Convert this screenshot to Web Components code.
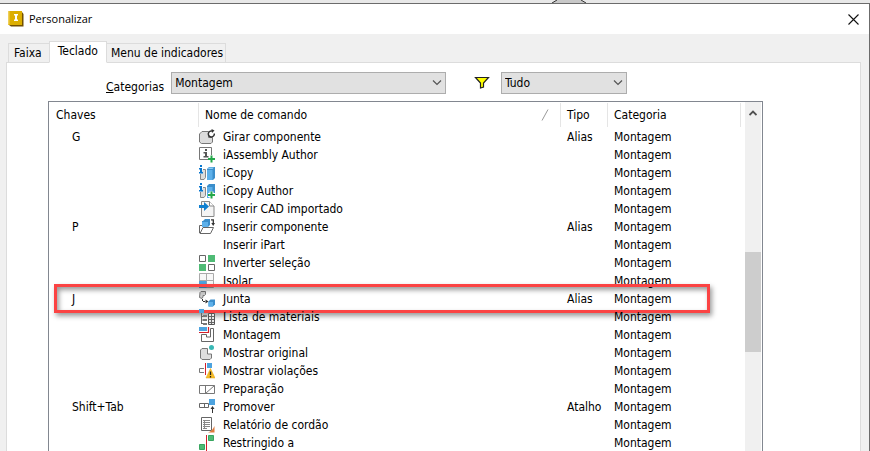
<!DOCTYPE html>
<html lang="pt-BR">
<head>
<meta charset="utf-8">
<title>Personalizar</title>
<style>
  html, body { margin: 0; height: 100%; overflow: hidden; }
  body { font: 12px/18px "DejaVu Sans Condensed", "Noto Sans", sans-serif; color: #000; background: #e8e8e8; }
</style>
</head>
<body>
<customize-dialog heading="Personalizar">
  <tab-strip slot="tabs" tabs="Faixa|Teclado|Menu de indicadores" selected="1"></tab-strip>
  <filter-bar></filter-bar>
  <command-list></command-list>
</customize-dialog>

<script>
const define = (name, html, setup) => customElements.define(name, class extends HTMLElement {
  connectedCallback() {
    if (this.shadowRoot) return;
    const t = document.createElement('template');
    t.innerHTML = html;
    this.attachShadow({ mode: 'open' }).append(t.content.cloneNode(true));
    if (setup) setup(this, this.shadowRoot);
  }
});

const ICONS = {
  rotate: '<path d="M3 2.500h6.500v6h4V13l-1.500 1.500H2.500l-2-1.500V5z" fill="#dcdcdc" stroke="#777"/><path d="M15.300 4.500a3 3 0 1 1-2.300-2.500" fill="none" stroke="#333" stroke-width="1.500"/><path d="M12.500 0 15.500 1.500 13 4z" fill="#333"/>',
  author: '<path d="M9 12.500H.500V.500h12V8" fill="#fff" stroke="#777"/><path d="M6 2h2v2H6zM4.500 5H8v4h1.500v1.500h-5V9H6V6.500H4.500z" fill="#555"/><path d="M9 12h7M12.500 8.500v7" stroke="#25a84a" stroke-width="2"/>',
  icopy: '<path d="M4 4.500h2.500v8L5 14.500H1.500V9" fill="#ddd" stroke="#888"/><path d="M1 0h2v2H1zM0 3h3v4h1v1.500H0V7h1V4.500H0z" fill="#0876cf"/><path d="m8 4 2-2h6v11l-2 2H8z" fill="#3b8ecb"/><path d="M8 5h5.500v10H8z" fill="#5db0ea"/><path d="m8.500 4 1.800-1.500H15L13.500 4z" fill="#8accf5"/>',
  icopyauthor: '<path d="M4 4.500h2.500v8L5 14.500H1.500V9" fill="#ddd" stroke="#888"/><path d="M1 0h2v2H1zM0 3h3v4h1v1.500H0V7h1V4.500H0z" fill="#0876cf"/><path d="m8 3 2-2h6v9h-4v5H8z" fill="#3b8ecb"/><path d="M8 4h5.500v5H11v6H8z" fill="#5db0ea"/><path d="M9 12h7M12.500 8.500v7" stroke="#fff" stroke-width="4"/><path d="M9 12h7M12.500 8.500v7" stroke="#25a84a" stroke-width="2"/>',
  import: '<path d="M2.500.500h8l4.500 4.500v10.500H2.500z" fill="#f4f4f4" stroke="#888"/><path d="M10.500.500V5H15" fill="#fff" stroke="#888"/><path d="M0 4h5V1l5 4.500L5 10V7H0z" fill="#1080d0"/>',
  place: '<path d="m4 8.500-3 6h10.500l3-6z" fill="#fff" stroke="#666"/><path d="M.500 14V6.500H3" fill="none" stroke="#666"/><path d="m4 2 2-2h5v6L9 8H3V2z" fill="#3b8ecb"/><path d="M3 3h6v5H3z" fill="#5db0ea"/><path d="M12 .800h2.300V5" fill="none" stroke="#333" stroke-width="1.300"/><path d="M12.300 4H16l-1.800 3z" fill="#333"/>',
  invert: '<path d="M.500.500h6v6h-6zM9.500 9.500h6v6h-6z" fill="#fff" stroke="#666"/><path d="M9 0h7v7H9zM0 9h7v7H0z" fill="#4fbb75"/>',
  isolate: '<path d="M.500.500h14v14H.500zM7.500.500v14M.500 7.500h14" fill="#f8f8f8" stroke="#aaa"/><path d="M0 8h7.500v7H0z" fill="#4da3df"/>',
  joint: '<path d="M1 1.500 2 .500h4.500v3L5.500 4.500H4V6L3 7.500.500 6.500z" fill="#ccc" stroke="#777"/><path d="M3.500 8v2.500H7" fill="none" stroke="#333" stroke-dasharray="2 1"/><path d="m6.500 8.500 3 2-3 2z" fill="#333"/><path d="m9.500 10.500 2-2H16v5L14 15.500H9.500z" fill="#3b8ecb"/><path d="M9.500 11H14v4.500H9.500z" fill="#5db0ea"/>',
  bom: '<path d="M0 0h5v4H0z" fill="#4da3df"/><path d="M2.500 4v11M2.500 7.500H4M2.500 11H4M2.500 14.500H4" fill="none" stroke="#666"/><path d="M4 6h4v2H4zM4 10h4v2H4zM4 14h4v2H4z" fill="#777"/><path d="M9.500 4.500h6v11h-6z" fill="#e8e8e8" stroke="#555"/><path d="M10 7.500h5M10 10.500h5M10 13.500h5M12.500 5v10" stroke="#666"/>',
  assembly: '<path d="M0 0h8v4H0z" fill="#4da3df"/><path d="M0 5.500h9.500V0" fill="none" stroke="#d3202c" stroke-width="1.200"/><path d="M11.500 1.500h3v13H2.500v-7h5V10h4z" fill="#fff" stroke="#666"/>',
  original: '<path d="M3 3.500h5.500V9h4v4l-1.500 1.500H3L1.500 13V5z" fill="#ddd" stroke="#777"/><circle cx="12.500" cy="2.500" r="2.500" fill="#38b8b5"/>',
  violation: '<path d="M5 5.500H.500v4H5" fill="#fff" stroke="#777"/><path d="M6.500 0v12" stroke="#d3202c"/><path d="M8 0h5v5H8z" fill="#4da3df"/><path d="m11.500 5.500 4.500 9.500H7z" fill="#f7bd27" stroke="#e0a010" stroke-width=".500"/><path d="M11.500 8.500V12M11.500 13v1.500" stroke="#222" stroke-width="1.300"/>',
  prep: '<path d="M.500 4.500h15v8H.500zM6.500 4.500v8M6.500 12.500l9-8" fill="#fff" stroke="#777"/>',
  promote: '<path d="M.500 4.500h9v4h-9zM5.500 4.500v4" fill="#fff" stroke="#666"/><path d="M10 0h6v6h-6z" fill="#4da3df"/><path d="M13.500 9v5" stroke="#333"/><path d="m11.500 10 2-3 2 3z" fill="#333"/>',
  report: '<path d="M2.500.500h10v13h-10z" fill="#fff" stroke="#666"/><path d="M4 3.500h7M4 5.500h7M4 7.500h7M4 9.500h7M4 11.500h4M5.500 3v9" stroke="#888"/><path d="M15.500 9v6.500H9c3-1 5-3 6.500-6.500z" fill="#e07a3c"/>',
  constrain: '<path d="M9.500.500h5v5h-5zM.500 9.500h5v5h-5z" fill="#4fbb75" stroke="#38a660"/><path d="M7.500 0v16" stroke="#d3202c"/>',
  funnel: '<path d="M1.500 2.500h13l-5 5.500V12l-3 1V8z" fill="#ffff00" stroke="#222" stroke-width="1.200"/>',
  app: '<path d="m1 14 2 1.500h12.500V3L14 1v13z" fill="#735000"/><path d="M0 0h14v14H0z" fill="#dcae00"/><path d="M0 0h1.500v13L0 14z" fill="#efcf58"/><path d="M6 3h4v1.500H9v4h1V10H6V8.500h1v-4H6z" fill="#fff"/>'
};

define('ui-icon', `<style>:host{display:block;width:16px;height:16px}svg{display:block;width:16px;height:16px}</style>
<svg viewBox="0 0 16 16" aria-hidden="true"></svg>`, (el, root) => {
  root.querySelector('svg').innerHTML = ICONS[el.getAttribute('name')] || '';
});

define('customize-dialog', `<style>
  :host{display:flex;flex-direction:column;min-height:100vh;background:#e8e8e8}
  .behind{height:3px;display:flex;justify-content:center;padding-left:267px}
  .behind svg{display:block}
  .frame{flex:1;display:flex;flex-direction:column;border-top:1px solid #6b6b6b;border-right:1px solid #6b6b6b;background:#f0f0f0}
  header{display:flex;align-items:center;height:30px;padding:0 10px 0 8px;background:#fff;gap:5px}
  h1{flex:1;margin:0;font:11px/18px "Open Sans","Noto Sans",sans-serif}
  button{border:0;padding:0;background:none;display:block}
  button svg{display:block}
  .body{flex:1;display:flex;flex-direction:column;padding:7px 8px 0 6px}
  .panel{flex:1;display:flex;flex-direction:column;background:#fff;border:1px solid #dcdcdc;border-bottom:0}
</style>
<div class="behind"><svg width="34" height="3" viewBox="0 0 34 3" aria-hidden="true"><path d="M0 3 5 0h24l5 3z" fill="#c8c8c8"/><path d="M0 3 5 0M34 3 29 0" stroke="#333"/></svg></div>
<section class="frame">
  <header><ui-icon name="app"></ui-icon><h1></h1>
    <button type="button" aria-label="Fechar"><svg width="11" height="11" viewBox="0 0 11 11"><path d="m.500.500 10 10M10.500.500l-10 10" stroke="#111" stroke-width="1.100"/></svg></button></header>
  <div class="body"><slot name="tabs"></slot><div class="panel"><slot></slot></div></div>
</section>`, (el, root) => { root.querySelector('h1').textContent = el.getAttribute('heading'); });

define('tab-strip', `<style>
  :host{display:block;position:relative;margin-bottom:-1px}
  div{display:flex;align-items:flex-end;padding-left:2px}
  button{font:inherit;color:inherit;height:20px;padding:0 2px 0 4px;border:1px solid #dcdcdc;border-left-width:0;background:#f0f0f0;white-space:nowrap}
  button:first-child{border-left-width:1px;padding:0 7px 0 5px;border-right-width:0}
  button[aria-selected=true]{height:22px;padding:0 8px 2px;background:#fff;border-left-width:1px;border-bottom-color:#fff}
</style><div role="tablist"></div>`, (el, root) => {
  const list = root.querySelector('div');
  el.getAttribute('tabs').split('|').forEach((label, i) => {
    const b = document.createElement('button');
    b.type = 'button';
    b.setAttribute('role', 'tab');
    b.textContent = label;
    b.setAttribute('aria-selected', String(i === Number(el.getAttribute('selected'))));
    list.append(b);
  });
});

define('combo-box', `<style>
  :host{display:flex;align-items:flex-start}
  label{padding-top:6px;margin-right:7px}
  label:empty{display:none}
  .box{flex:1;display:grid;align-items:center}
  select,svg{grid-area:1/1}
  select{appearance:none;width:100%;height:22px;font:inherit;color:inherit;padding:0 20px 0 3px;border:1px solid #adadad;border-radius:0;background:#e1e1e1;margin:0}
  svg{justify-self:end;margin-right:4px;pointer-events:none}
</style><label for="s"></label><div class="box"><select id="s"></select>
<svg width="10" height="6" viewBox="0 0 10 6" aria-hidden="true"><path d="m1 .500 4 4 4-4" fill="none" stroke="#555" stroke-width="1.200"/></svg></div>`, (el, root) => {
  const text = el.getAttribute('label');
  const select = root.querySelector('select');
  if (el.hasAttribute('unlabelled')) select.setAttribute('aria-label', text);
  else {
    const u = document.createElement('u');
    u.textContent = text[0];
    root.querySelector('label').append(u, text.slice(1));
  }
  select.add(new Option(el.getAttribute('value')));
});

define('filter-bar', `<style>
  :host{display:flex;align-items:flex-start;padding:9px 233px 5px 99px}
  .category{flex:340 1 0}
  ui-icon{margin:3px 11px 0 28px}
  .filter{flex:126 1 0}
</style>
<combo-box class="category" label="Categorias" value="Montagem"></combo-box>
<ui-icon name="funnel"></ui-icon>
<combo-box class="filter" label="Filtro" value="Tudo" unlabelled></combo-box>`);

define('row-highlight', `<style>
  :host{position:absolute;inset:-6px 31px -5px 5px;border:3px solid #fb4343;box-shadow:2px 3px 5px #0006,inset 2px 3px 5px #0006;pointer-events:none}
</style>`);

define('scroll-rail', `<style>
  :host{display:flex;flex-direction:column;align-items:center;width:16px;background:#f0f0f0;padding-top:8px;box-sizing:border-box}
  i{display:block;width:16px;height:100px;margin-top:136px;background:#cdcdcd}
</style><svg width="8" height="6" viewBox="0 0 8 6" aria-hidden="true"><path d="m.500 5 3.500-3.500L7.500 5" fill="none" stroke="#505050" stroke-width="1.800"/></svg><i></i>`);

const ROWS = [
  ['G', 'rotate', 'Girar componente', 'Alias'],
  ['', 'author', 'iAssembly Author', ''],
  ['', 'icopy', 'iCopy', ''],
  ['', 'icopyauthor', 'iCopy Author', ''],
  ['', 'import', 'Inserir CAD importado', ''],
  ['P', 'place', 'Inserir componente', 'Alias'],
  ['', '', 'Inserir iPart', ''],
  ['', 'invert', 'Inverter seleção', ''],
  ['', 'isolate', 'Isolar', ''],
  ['J', 'joint', 'Junta', 'Alias', true],
  ['', 'bom', 'Lista de materiais', ''],
  ['', 'assembly', 'Montagem', ''],
  ['', 'original', 'Mostrar original', ''],
  ['', 'violation', 'Mostrar violações', ''],
  ['', 'prep', 'Preparação', ''],
  ['Shift+Tab', 'promote', 'Promover', 'Atalho'],
  ['', 'report', 'Relatório de cordão', ''],
  ['', 'constrain', 'Restringido a', '']
];

define('command-list', `<style>
  :host{flex:1 0 0;min-height:0;display:flex;gap:4px;margin:0 97px 0 41px;padding-right:1px;border:1px solid #828790;border-bottom:0;overflow:hidden}
  .rows{flex:1}
  table{width:100%;table-layout:fixed;border-collapse:separate;border-spacing:0}
  .keys{width:150px}.type{width:47px}.group{width:133px}
  th,td{padding:0;text-align:left;font-weight:400;white-space:nowrap}
  th{height:26px;padding-left:6px}
  th:first-child{padding-left:7px}
  .head{display:flex;align-items:center;justify-content:space-between;height:24px;border-right:1px solid #e5e5e5;padding-right:11px}
  td{height:18px}
  tr{position:relative}
  td:first-child{padding-left:23px}
  td:nth-child(n+3){padding-left:6px}
  .name{display:flex;align-items:center;gap:8px}
</style>
<div class="rows"><table>
<colgroup><col class="keys"><col><col class="type"><col class="group"></colgroup>
<thead><tr><th scope="col"><div class="head">Chaves</div></th>
<th scope="col" aria-sort="ascending"><div class="head">Nome de comando<svg width="8" height="12" viewBox="0 0 8 12" aria-hidden="true"><path d="M1 11.500 7 .500" stroke="#999"/></svg></div></th>
<th scope="col"><div class="head">Tipo</div></th><th scope="col"><div class="head">Categoria</div></th></tr></thead>
<tbody></tbody></table></div><scroll-rail></scroll-rail>`, (el, root) => {
  root.querySelector('tbody').innerHTML = ROWS.map(([key, icon, name, type, marked]) =>
    `<tr><td>${key}${marked ? '<row-highlight></row-highlight>' : ''}</td><td><div class="name"><ui-icon name="${icon}"></ui-icon>${name}</div></td><td>${type}</td><td>Montagem</td></tr>`).join('');
});
</script>
</body>
</html>
